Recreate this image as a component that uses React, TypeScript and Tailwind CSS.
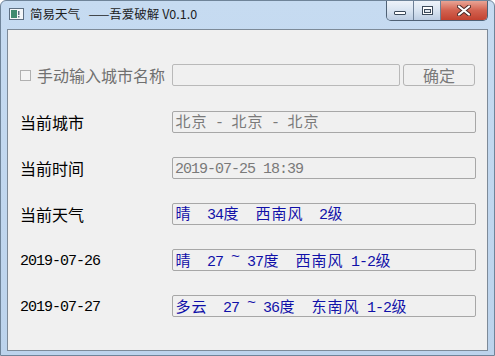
import React from "react";

const CJK = "font-['Noto_Sans_CJK_SC','Noto_Sans',sans-serif]";

function Mono({ text, className }: { text: string; className?: string }) {
  return (
    <span className={"whitespace-pre leading-none " + (className ?? "")}>
      {text.split("").map((c, i) => {
        const wide = c.charCodeAt(0) > 255;
        if (wide) {
          return (
            <span
              key={i}
              className="inline-block w-[16px] text-center text-[15px] font-['Noto_Sans_CJK_SC',sans-serif]"
            >
              {c}
            </span>
          );
        }
        if (c === "~") {
          return (
            <span
              key={i}
              className="inline-block w-[8px] text-center text-[15px] align-[5px] font-['Liberation_Mono',monospace]"
            >
              {c}
            </span>
          );
        }
        return (
          <span
            key={i}
            className="inline-block w-[8px] text-center text-[15px] tracking-[-1px] font-['Liberation_Mono',monospace]"
          >
            {c === " " ? "\u00a0" : c}
          </span>
        );
      })}
    </span>
  );
}

function Field({ text, blue }: { text: string; blue?: boolean }) {
  return (
    <div className="w-[304px] h-[22px] border border-[#a7a7a7] rounded-[2px] bg-[#f0f0f0] flex items-center pl-[2px] overflow-hidden">
      <Mono text={text} className={blue ? "text-[#1010a8]" : "text-[#7a7a7a]"} />
    </div>
  );
}

function Row({ label, children, mono }: { label: string; children: React.ReactNode; mono?: boolean }) {
  return (
    <div className="h-[22px] flex items-center">
      <div className="w-[164px] pl-[12px] text-[16px] text-black leading-none whitespace-nowrap">
        {mono ? <Mono text={label} className="text-black" /> : <span className={CJK}>{label}</span>}
      </div>
      {children}
    </div>
  );
}

export default function App() {
  return (
    <div className="w-[495px] h-[356px] flex flex-col bg-gradient-to-b from-[#c6dbf1] to-[#bcd3ec] border border-[#6f8499] rounded-t-[6px] overflow-hidden">
      {/* Title bar */}
      <div className="h-[28px] flex items-start">
        <div className="flex items-center h-[26px] pl-[8px]">
          <svg width="15" height="12" viewBox="0 0 15 12" className="mr-[6px]">
            <rect x="0.5" y="0.5" width="14" height="11" fill="#f4f6f8" stroke="#5d6f82" />
            <rect x="2" y="2" width="6" height="8" fill="#3f8a6f" />
            <rect x="9" y="3" width="1.5" height="4" fill="#5d6f82" />
            <rect x="9" y="8" width="1.5" height="1.5" fill="#5d6f82" />
          </svg>
          <span className={"text-[12.5px] text-[#1e1e1e] whitespace-pre " + CJK}>
            简易天气   ——吾爱破解 V0.1.0
          </span>
        </div>
        <div className="ml-auto mr-[6px] flex h-[20px] border border-t-0 border-[#4f6175] rounded-b-[5px] overflow-hidden">
          <div className="w-[27px] h-full bg-gradient-to-b from-[#eef3f9] via-[#d9e4f1] to-[#bccde2] border-r border-[#6e8096] flex items-center justify-center">
            <div className="mt-[5px] w-[12px] h-[4px] bg-white border border-[#3c4a5a] rounded-[1px]" />
          </div>
          <div className="w-[27px] h-full bg-gradient-to-b from-[#eef3f9] via-[#d9e4f1] to-[#bccde2] border-r border-[#6e8096] flex items-center justify-center">
            <div className="w-[11px] h-[9px] bg-white border border-[#3c4a5a] flex items-center justify-center">
              <div className="w-[7px] h-[4px] border border-[#3c4a5a] bg-[#dfe6ee]" />
            </div>
          </div>
          <div className="w-[46px] h-full bg-gradient-to-b from-[#e8a495] via-[#d2614f] to-[#c2412f] flex items-center justify-center">
            <svg width="14" height="11" viewBox="0 0 14 11">
              <path d="M2 1.5 L12 9.5 M12 1.5 L2 9.5" stroke="#4a2a28" strokeWidth="4" strokeLinecap="round" />
              <path d="M2 1.5 L12 9.5 M12 1.5 L2 9.5" stroke="#ffffff" strokeWidth="2.2" strokeLinecap="round" />
            </svg>
          </div>
        </div>
      </div>

      {/* Client area */}
      <div className="mx-[6px] h-[322px] border border-[#7d8a98] bg-[#f0f0f0] flex flex-col gap-[24px] pt-[34px]">
        <div className="h-[22px] flex items-center">
          <div className="w-[164px] pl-[12px] flex items-center whitespace-nowrap">
            <div className="w-[11px] h-[11px] border border-[#b0b0b0] bg-[#f4f4f4] mr-[6px]" />
            <span className={"text-[16px] text-[#707070] leading-none " + CJK}>手动输入城市名称</span>
          </div>
          <div className="w-[228px] h-[22px] border border-[#b9b9b9] rounded-[2px] bg-[#f0f0f0]" />
          <div className="ml-[3px] w-[72px] h-[22px] border border-[#b4b4b4] rounded-[3px] bg-[#f0f0f0] flex items-center justify-center">
            <span className={"text-[16px] text-[#7a7a7a] leading-none " + CJK}>确定</span>
          </div>
        </div>
        <div className="mt-[1px]">
          <Row label="当前城市">
            <Field text="北京 - 北京 - 北京" />
          </Row>
        </div>
        <Row label="当前时间">
          <Field text="2019-07-25 18:39" />
        </Row>
        <Row label="当前天气">
          <Field text="晴  34度  西南风  2级" blue />
        </Row>
        <Row label="2019-07-26" mono>
          <Field text="晴  27 ~ 37度  西南风 1-2级" blue />
        </Row>
        <Row label="2019-07-27" mono>
          <Field text="多云  27 ~ 36度  东南风 1-2级" blue />
        </Row>
      </div>
    </div>
  );
}
